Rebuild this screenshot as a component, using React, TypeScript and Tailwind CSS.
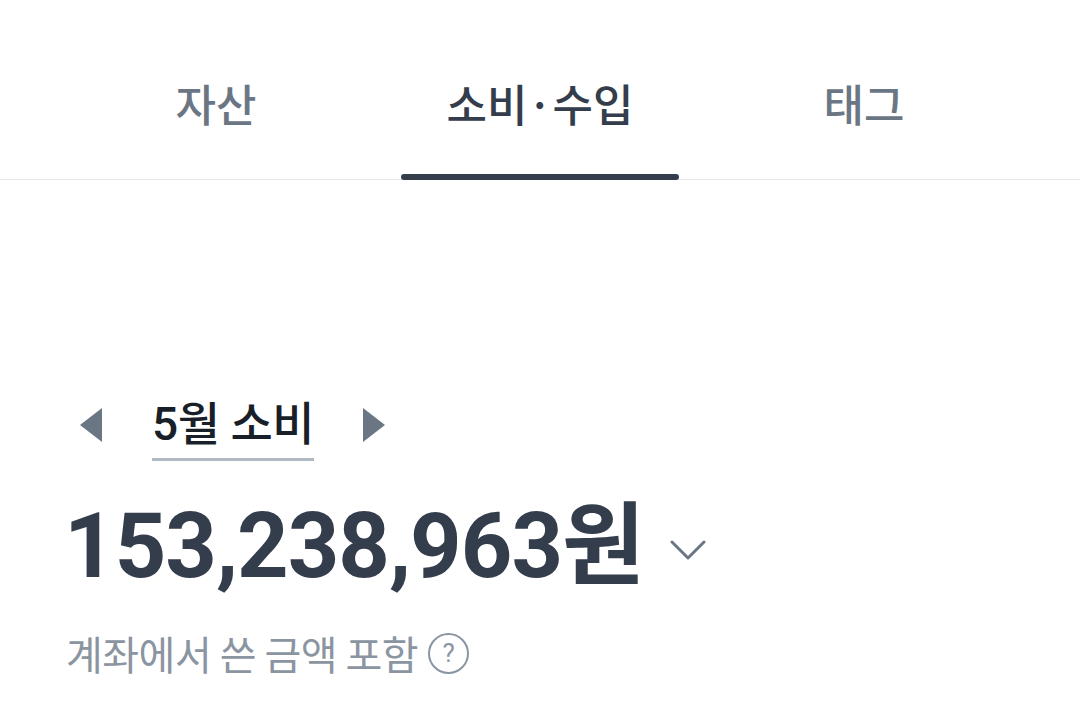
import React from 'react';

const TABS = ['자산', '소비·수입', '태그'];

export default function App() {
  const active = 1;

  return (
    <div className="w-[1080px] h-[711px] bg-white overflow-hidden font-['Roboto','Noto_Sans_CJK_KR',sans-serif]">
      {/* Tabs */}
      <div className="border-b border-[#e5e8eb]">
        <div className="grid grid-cols-3 px-[54px]">
          {TABS.map((t, i) => (
            <div key={t} className="flex flex-col items-center h-[179px]">
              <div
                className={`mt-[72px] h-[62px] leading-[62px] text-[44px] font-medium font-['Noto_Sans_CJK_KR',sans-serif] ${
                  i === active ? 'text-[#333d4b]' : 'text-[#6b7684]'
                }`}
              >
                {t}
              </div>
              <div className="flex-1" />
              {i === active && <div className="w-[278px] h-[6px] rounded-full bg-[#333d4b] -mb-[1px]" />}
            </div>
          ))}
        </div>
      </div>

      {/* Month selector */}
      <div className="flex items-start pl-[80px] mt-[216px]">
        <svg width="22" height="34" viewBox="0 0 22 34" className="shrink-0 mt-[12px]">
          <path d="M22 0 L0 17 L22 34 Z" fill="#6b7684" />
        </svg>
        <div className="ml-[50px] flex flex-col">
          <span className="text-[46px] leading-[56px] font-medium text-[#191f28] tracking-[-0.5px]">5월 소비</span>
          <div className="h-[3px] bg-[#b0b8c1] mt-[6px]" />
        </div>
        <svg width="22" height="34" viewBox="0 0 22 34" className="shrink-0 ml-[49px] mt-[12px]">
          <path d="M0 0 L22 17 L0 34 Z" fill="#6b7684" />
        </svg>
      </div>

      {/* Amount */}
      <div className="flex items-center pl-[64px] mt-[31px]">
        <span className="text-[90px] leading-[110px] font-bold text-[#333d4b] tracking-[-1px]">153,238,963원</span>
        <svg width="36" height="20" viewBox="0 0 36 20" className="ml-[26px] mt-[6px]">
          <path d="M2 2 L18 18 L34 2" fill="none" stroke="#6b7684" strokeWidth="3" strokeLinecap="round" strokeLinejoin="round" />
        </svg>
      </div>

      {/* Note */}
      <div className="flex items-center pl-[66px] mt-[25px]">
        <span className="text-[40px] leading-[52px] text-[#8b95a1] tracking-[-0.5px] font-['Noto_Sans_CJK_KR',sans-serif]">계좌에서 쓴 금액 포함</span>
        <div className="ml-[10px] w-[41px] h-[41px] rounded-full border-[2.5px] border-[#8b95a1] flex items-center justify-center text-[26px] leading-none text-[#8b95a1] font-['Roboto',sans-serif]">
          ?
        </div>
      </div>
    </div>
  );
}
